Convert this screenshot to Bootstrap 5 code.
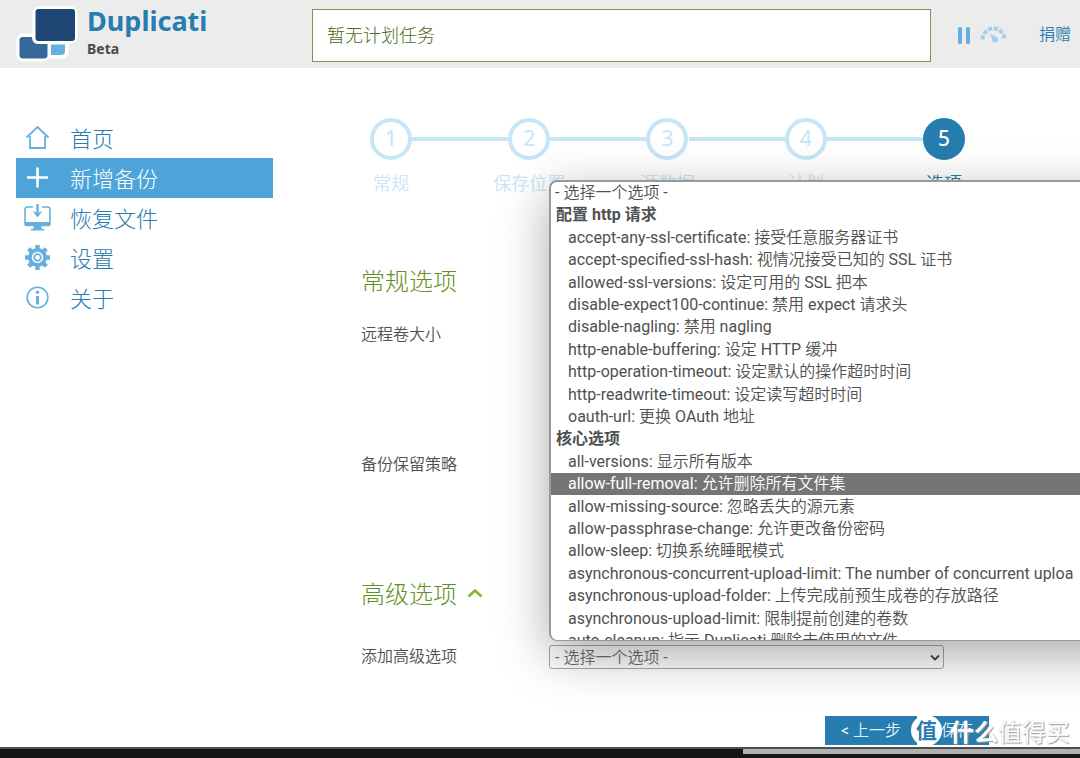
<!DOCTYPE html>
<html lang="zh-CN">
<head>
<meta charset="utf-8">
<meta name="viewport" content="width=device-width, initial-scale=1">
<title>Duplicati</title>
<link href="https://cdn.jsdelivr.net/npm/bootstrap@5.3.0/dist/css/bootstrap.min.css" rel="stylesheet">
<style>
:root{--blue:#277cb0;--sky:#65b1dd;--pale:#c7e5f6;--ink:#505050}
body{font-family:Roboto,"Noto Sans CJK SC DemiLight","Noto Sans CJK SC",sans-serif;font-size:16px;line-height:24px;color:var(--ink)}
a{text-decoration:none;color:var(--blue)}
.light{font-family:"Noto Sans CJK SC Light","Noto Sans CJK SC",sans-serif;font-weight:300}
.topbar{background:#ececec;height:68px}
.brand{width:296px}
.brand-text{padding:5px 0 0 7px}
.brand-name{font:700 27px/32px "Noto Sans","Noto Sans CJK SC",sans-serif;color:var(--blue)}
.brand-tag{font:700 14px/24px "Noto Sans","Noto Sans CJK SC",sans-serif;color:#4b4b4b}
.status{height:53px;margin-top:9px;padding:0 14px 4px;border:1px solid #7d9558;color:#4d6a24;font-size:18px}
.tools{width:149px;padding:2px 0 0 25px}
.tools a{margin-left:27px}
.side{width:296px;padding-right:39px}
.side a{height:40px;font-size:22px;line-height:38px;padding:0 0 2px 8px;gap:20px}
.side svg{width:28px;height:28px;margin:2px -2px 0 0;color:var(--sky)}
.side a.active{background:#4ca4d8;color:#fff}
.side a.active svg{color:#fff}
.content{padding-left:49px}
.steps{display:grid;grid-template-columns:repeat(5,1fr);margin:0 67px 0 -39px}
.steps li{position:relative;text-align:center;color:var(--pale);font-size:18px}
.steps li+li::before{content:"";position:absolute;top:19px;right:calc(50% + 21px);width:calc(100% - 42px);height:4px;background:var(--pale)}
.dot{width:42px;height:42px;border:4px solid var(--pale);border-radius:50%;font-family:"Noto Sans",sans-serif;font-size:21px;padding-bottom:2px;margin:0 auto 12px}
.steps .now{color:var(--blue)}
.now .dot{background:var(--blue);border-color:var(--blue);color:#fff;font-weight:500}
h2{font-size:24px;line-height:32px;color:#5f9020;margin:0}
.section-first{margin-top:68px}
.section-next{margin-top:100px}
.field-first{margin-top:27px}
.field-next{margin-top:106px}
.field-last{margin-top:36px}
.field-name{width:188px}
.picker{width:calc(100% - 324px);min-width:240px}
.picker select{width:100%;height:24px;padding:1px 5px 0;border:1px solid #a8a8a8;border-radius:3px;background:#fff;color:#707070;appearance:none;line-height:20px;display:block}
.picker .caret{position:absolute;right:4px;top:9px;pointer-events:none}
.menu{position:absolute;left:0;bottom:100%;width:620px;height:461px;margin-bottom:4px;overflow:hidden;background:#fff;border:1px solid #999;border-width:2px 1px 1px 2px;border-radius:8px;box-shadow:0 14px 50px rgba(0,0,0,.34);white-space:nowrap;z-index:5}
.menu li{line-height:22px;padding-left:17px}
.menu li:nth-child(5n),.menu li:nth-child(5n+3){line-height:23px}
.menu .pick{padding-left:4px}
.menu .group{padding-left:5px;font-family:Roboto,"Noto Sans CJK SC",sans-serif;font-weight:700}
.menu .chosen{background:#757575;color:#fff}
.act{height:29px;padding:0 16px;border:0;border-radius:0;background:var(--blue);color:#e3f0f8;line-height:29px}
.act:hover{background:#1f6a98;color:#fff}
.actions{margin:auto 91px 2px 0}
.stamp{position:absolute;right:10px;bottom:1px;pointer-events:none;z-index:6;color:#fff;font-family:"Noto Sans CJK SC",sans-serif;font-size:24px;line-height:30px;text-shadow:1px 1px 1px #999,0 0 1px #bbb}
.stamp .seal{width:31px;height:31px;border-radius:50%;background:#fff;color:var(--blue);font-weight:700;font-size:21px;line-height:27px;padding-bottom:3px;margin-right:8px;text-shadow:none}
.dock{height:11px;background:#161616;border-top:2px solid #4b504e}
.dock div{width:337px;height:5px;background:#b1b1b1}
</style>
</head>
<body>
<div class="d-flex flex-column min-vh-100 overflow-hidden">
<header class="topbar d-flex align-items-start">
  <a href="#" class="brand d-flex flex-shrink-0 ms-3">
    <svg class="flex-shrink-0" width="64" height="64" viewBox="0 0 64 64" aria-hidden="true">
      <g stroke="#fff" stroke-width="7" stroke-linejoin="round" fill="#fff"><rect x="4" y="37" width="27" height="21" rx="3"/><path d="M20 37h29v14q0 4-4 4H35H20z"/><rect x="20" y="10" width="38" height="30" rx="3"/></g>
      <path d="M35 44.500h14V51q0 4-4 4H35z" fill="#65b1dd"/>
      <path d="M7 37h9q0 7 6 7h9.500v11q0 3.500-3.500 3.500H7q-3.500 0-3.500-3.500V40q0-3 3.500-3z" fill="#346899"/>
      <rect x="19.500" y="9" width="39.500" height="32" rx="3" fill="#1f4773"/>
    </svg>
    <span class="brand-text d-flex flex-column"><span class="brand-name">Duplicati</span><span class="brand-tag">Beta</span></span>
  </a>
  <div class="status light bg-white flex-grow-1 d-flex align-items-center">暂无计划任务</div>
  <div class="tools d-flex align-items-center overflow-hidden flex-shrink-0 text-nowrap h-100">
    <svg class="flex-shrink-0" width="56" height="20" viewBox="0 0 56 20" role="img" aria-label="暂停与限速">
      <rect x="2" y="2" width="4" height="17" rx="1.500" fill="#65b1dd"/><rect x="10" y="2" width="4" height="17" rx="1.500" fill="#65b1dd"/>
      <path d="M34 8.500l5.500 3a3 3 0 1 1-3.500 2.500z" fill="#a5cfe8"/>
      <path d="M26.500 14.500a11 11 0 0 1 22 0" fill="none" stroke="#a5cfe8" stroke-width="4" stroke-dasharray="4.200 1.600"/>
    </svg>
    <a href="#">捐赠</a><span class="ms-2" style="color:#7ab8de">|</span>
  </div>
</header>
<main class="d-flex flex-grow-1" style="padding-top:50px">
  <nav class="side flex-shrink-0 ms-3">
    <ul class="list-unstyled mb-0 light">
      <li><a href="#" class="d-flex align-items-center"><svg viewBox="0 0 28 28" fill="none" stroke="currentColor" stroke-width="1.800"><path d="M2.500 13.500L13.500 3l11 10.500M6 12v12h15V12"/></svg>首页</a></li>
      <li><a href="#" class="active d-flex align-items-center" aria-current="page"><svg viewBox="0 0 28 28" fill="none" stroke="currentColor" stroke-width="2.600" stroke-linecap="round"><path d="M13.500 4.500v18M4 13.500h19"/></svg>新增备份</a></li>
      <li><a href="#" class="d-flex align-items-center"><svg viewBox="0 0 28 28" fill="none" stroke="currentColor"><path d="M9 3H3.500Q1 3 1 5.500V20q0 1.500 1.500 1.500h22Q26 21.500 26 20V5.500Q26 3 23.500 3H18" stroke-width="1.600"/><path d="M1 18h25v2.500q0 1.500-1.500 1.500h-22Q1 22 1 20.500zM10 22h7l1 3h2v1.500H7V25h2z" fill="currentColor" stroke="none"/><path d="M13.500 0v10" stroke-width="2.400"/><path d="M8.500 7l5 2 5-2-5 6.500z" fill="currentColor" stroke="none"/></svg>恢复文件</a></li>
      <li><a href="#" class="d-flex align-items-center"><svg viewBox="0 0 28 28" fill="none" stroke="currentColor"><circle cx="13.500" cy="13.500" r="7.600" stroke-width="3.800"/><circle cx="13.500" cy="13.500" r="3.300" stroke-width="1.800"/><path d="M13.500 1v4M13.500 22v4M1 13.500h4M22 13.500h4M4.700 4.700l2.800 2.800M19.500 19.500l2.800 2.800M4.700 22.300l2.800-2.800M19.500 7.500l2.800-2.800" stroke-width="4.400"/></svg>设置</a></li>
      <li><a href="#" class="d-flex align-items-center"><svg viewBox="0 0 28 28" fill="none" stroke="currentColor"><circle cx="13.500" cy="13.500" r="10.300" stroke-width="1.600"/><path d="M13.500 12v8.500" stroke-width="3"/><circle cx="13.500" cy="8.300" r="1.700" fill="currentColor" stroke="none"/></svg>关于</a></li>
    </ul>
  </nav>
  <section class="content flex-grow-1 d-flex flex-column position-relative">
    <ol class="steps list-unstyled">
      <li><div class="dot d-flex align-items-center justify-content-center">1</div>常规</li>
      <li><div class="dot d-flex align-items-center justify-content-center">2</div>保存位置</li>
      <li><div class="dot d-flex align-items-center justify-content-center">3</div>源数据</li>
      <li><div class="dot d-flex align-items-center justify-content-center">4</div>计划</li>
      <li class="now" aria-current="step"><div class="dot d-flex align-items-center justify-content-center">5</div>选项</li>
    </ol>
    <form class="d-flex flex-column flex-grow-1">
      <h2 class="light section-first">常规选项</h2>
      <div class="field-name field-first">远程卷大小</div>
      <div class="field-name field-next">备份保留策略</div>
      <h2 class="light d-flex align-items-center section-next">高级选项
        <svg class="ms-2" width="20" height="14" viewBox="0 0 20 14" fill="none" stroke="#83b92b" stroke-width="2.600" aria-hidden="true"><path d="M3.500 10.500l6.500-6 6.500 6"/></svg>
      </h2>
      <div class="d-flex field-last">
        <label class="field-name flex-shrink-0" for="advanced">添加高级选项</label>
        <div class="picker position-relative">
          <select id="advanced"><option>- 选择一个选项 -</option></select>
          <svg class="caret" width="10" height="8" viewBox="0 0 10 8" fill="none" stroke="#444" stroke-width="1.800" aria-hidden="true"><path d="M1 1.500l4 4 4-4"/></svg>
          <ul class="menu list-unstyled" role="listbox" aria-label="添加高级选项">
            <li class="pick" role="option">- 选择一个选项 -</li>
            <li class="group">配置 http 请求</li>
            <li role="option">accept-any-ssl-certificate: 接受任意服务器证书</li>
            <li role="option">accept-specified-ssl-hash: 视情况接受已知的 SSL 证书</li>
            <li role="option">allowed-ssl-versions: 设定可用的 SSL 把本</li>
            <li role="option">disable-expect100-continue: 禁用 expect 请求头</li>
            <li role="option">disable-nagling: 禁用 nagling</li>
            <li role="option">http-enable-buffering: 设定 HTTP 缓冲</li>
            <li role="option">http-operation-timeout: 设定默认的操作超时时间</li>
            <li role="option">http-readwrite-timeout: 设定读写超时时间</li>
            <li role="option">oauth-url: 更换 OAuth 地址</li>
            <li class="group">核心选项</li>
            <li role="option">all-versions: 显示所有版本</li>
            <li class="chosen" role="option" aria-selected="true">allow-full-removal: 允许删除所有文件集</li>
            <li role="option">allow-missing-source: 忽略丢失的源元素</li>
            <li role="option">allow-passphrase-change: 允许更改备份密码</li>
            <li role="option">allow-sleep: 切换系统睡眠模式</li>
            <li role="option">asynchronous-concurrent-upload-limit: The number of concurrent uploa</li>
            <li role="option">asynchronous-upload-folder: 上传完成前预生成卷的存放路径</li>
            <li role="option">asynchronous-upload-limit: 限制提前创建的卷数</li>
            <li role="option">auto-cleanup: 指示 Duplicati 删除未使用的文件</li>
          </ul>
        </div>
      </div>
      <div class="actions d-flex justify-content-end gap-2">
        <button type="button" class="btn act">&lt; 上一步</button>
        <button type="submit" class="btn act">保存</button>
      </div>
    </form>
    <div class="stamp d-flex align-items-center"><span class="seal d-flex align-items-center justify-content-center">值</span><b>什么</b>值得买</div>
  </section>
</main>
<footer class="dock d-flex justify-content-end"><div></div></footer>
</div>
<script src="https://cdn.jsdelivr.net/npm/bootstrap@5.3.0/dist/js/bootstrap.bundle.min.js"></script>
</body>
</html>
